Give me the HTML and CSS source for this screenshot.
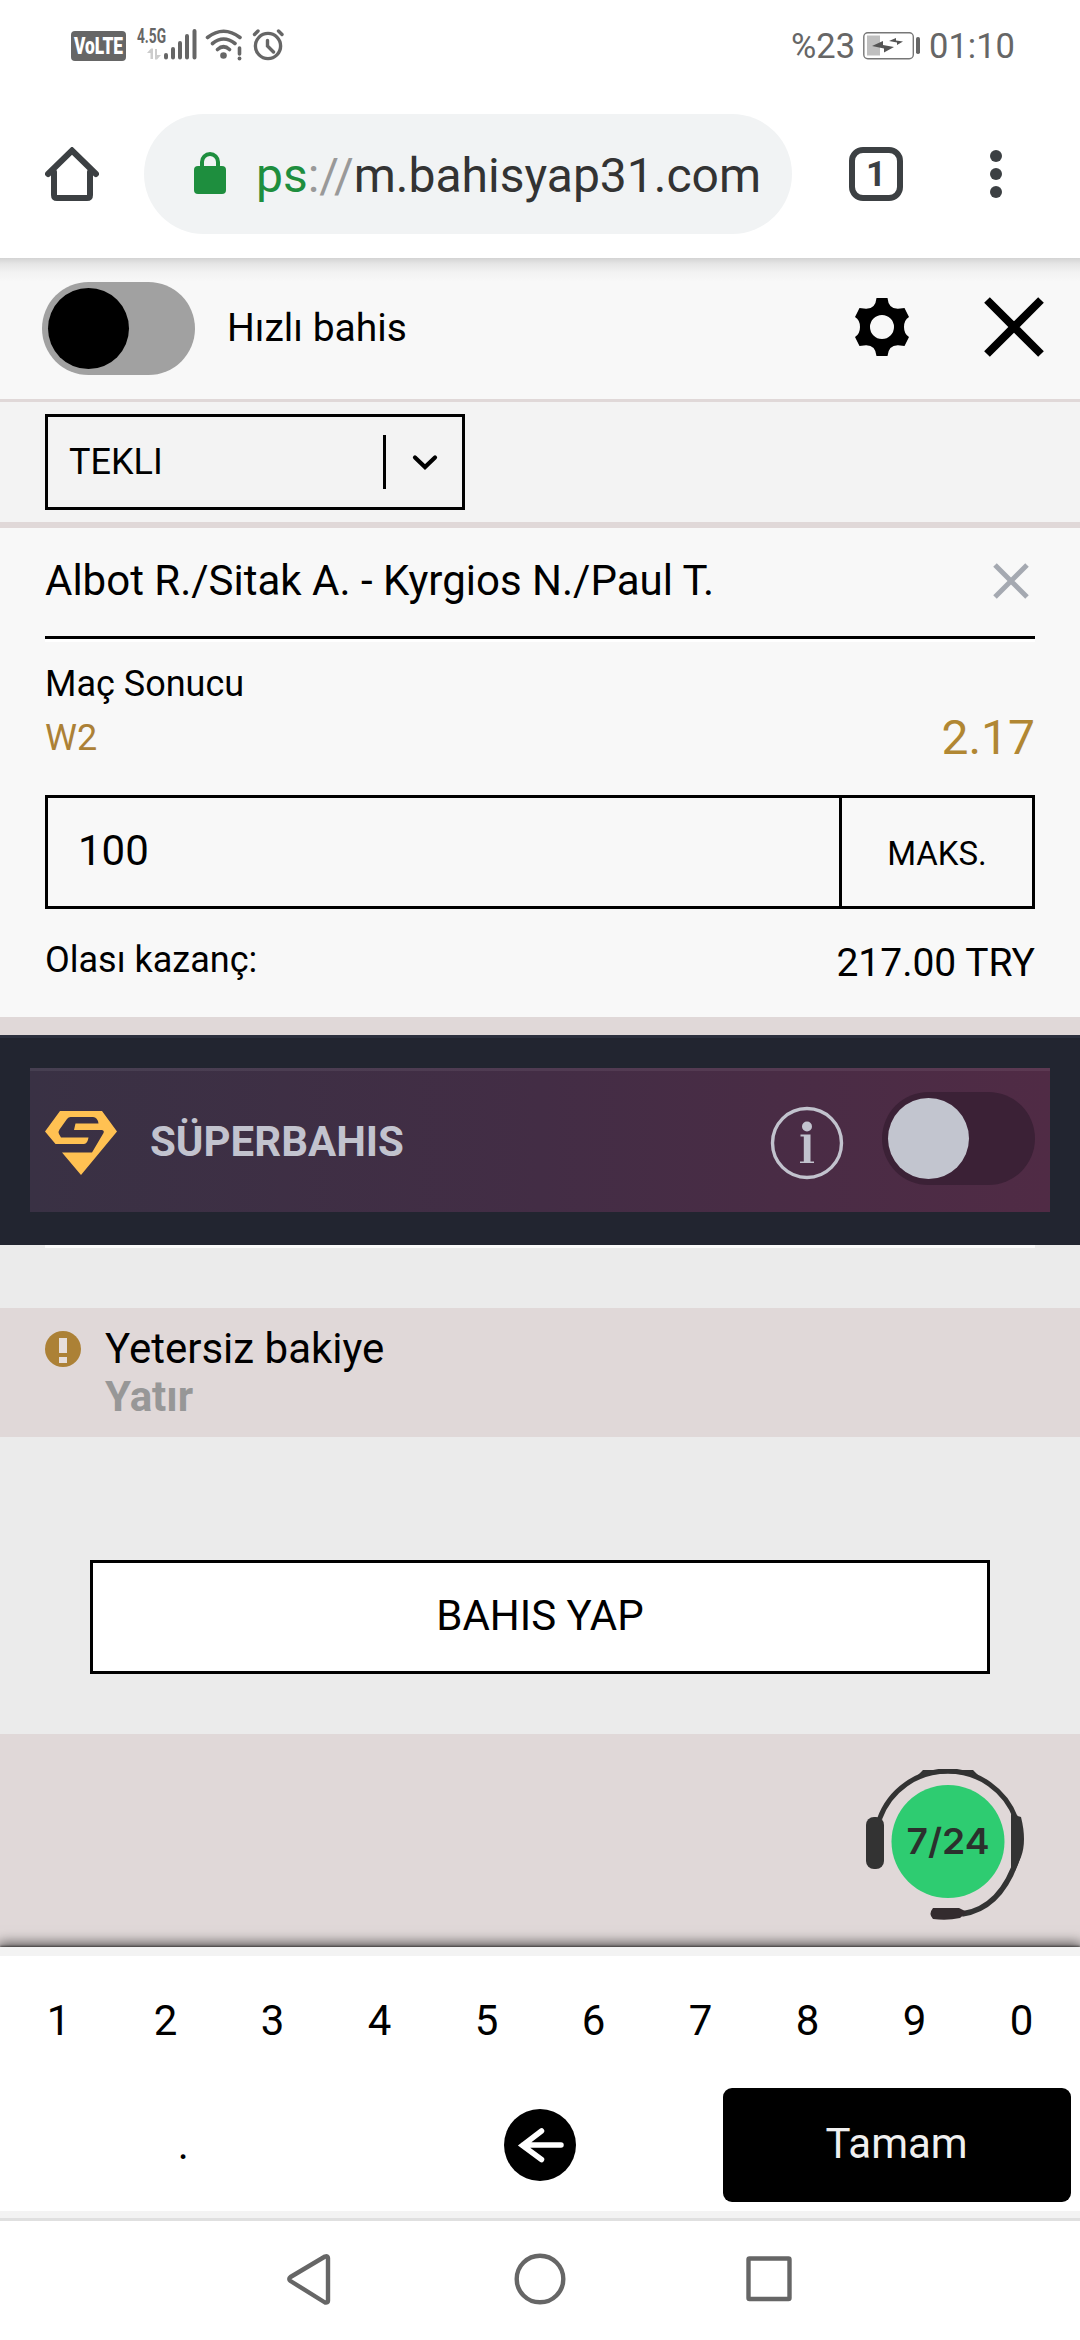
FILE: index.html
```html
<!DOCTYPE html>
<html lang="tr">
<head>
<meta charset="utf-8">
<title>Bahis kuponu</title>
<link rel="stylesheet" href="styles.css">
</head>
<body>
<div class="screen">
  <header class="status">
    <svg class="status-icons" width="220" height="40" viewBox="70 25 220 40">
      <rect x="71" y="31" width="55" height="30" rx="4" fill="#666"/>
      <text class="volte" x="74" y="54" textLength="49" lengthAdjust="spacingAndGlyphs">VoLTE</text>
      <text class="net" x="137" y="42.500" textLength="29" lengthAdjust="spacingAndGlyphs">4.5G</text>
      <path d="M147 53l4-4.500h2V59h-2.500v-6zM155 49h2v6h4l-4 4.500h-2z" fill="#ccc"/>
      <path d="M166 55v2.500M173 49v8.500M180 43v14.500M187 36v21.500M194.500 31v26.500" fill="none" stroke="#666" stroke-width="4" stroke-linecap="round"/>
      <g fill="none" stroke="#666" stroke-width="3.600" stroke-linecap="round">
        <path d="M207.500 37.500Q223.500 25 240 37.500M212.500 43.500Q223.500 34.500 235 43.500M217.500 49.500Q223.500 44 229.500 49.500"/>
        <path d="M239.500 48v6"/>
      </g>
      <circle cx="223.500" cy="55.500" r="3.300" fill="#666"/>
      <circle cx="239.500" cy="58.500" r="1.900" fill="#666"/>
      <g fill="none" stroke="#666" stroke-width="3.400" stroke-linecap="round">
        <circle cx="268" cy="46" r="12.600"/>
        <path d="M267.500 40.500V46l6 6M254.500 34.500l3.500-3.500M282 34.500l-3.500-3.500"/>
      </g>
    </svg>
    <div class="status-right">
      <span>%23</span>
      <svg width="58" height="28" viewBox="0 0 58 28">
        <rect x=".8" y=".8" width="49.500" height="26" rx="4" fill="none" stroke="#777" stroke-width="1.400"/>
        <rect x="4" y="3.500" width="13" height="20" fill="#bfbfbf"/>
        <path d="M9 14l11-5v4l11 2-10 5.500v-4zM26 9l7-3v2.500l7 1-6 3.500v-2.500z" fill="#555"/>
        <rect x="53" y="5" width="4" height="17" rx="1.800" fill="#666"/>
      </svg>
      <span>01:10</span>
    </div>
  </header>

  <nav class="browser">
    <svg width="54" height="54" viewBox="0 0 54 54">
      <path d="M9 25v23q0 3 3 3h30q3 0 3-3V25M3 27L27 3.500 51 27" fill="none" stroke="#3c4043" stroke-width="6" stroke-linecap="round"/>
    </svg>
    <div class="url">
      <svg width="32" height="42" viewBox="0 0 32 42">
        <rect y="14" width="32" height="28" rx="4" fill="#1e8e3e"/>
        <path d="M8 16v-6a8 8 0 0 1 16 0v6" fill="none" stroke="#1e8e3e" stroke-width="4"/>
      </svg>
      <span class="url-text"><span class="secure">ps</span><span class="sep">://</span>m.bahisyap31.com</span>
    </div>
    <div class="tabs">1</div>
    <svg width="12" height="48" viewBox="0 0 12 48" fill="#3c4043">
      <circle cx="6" cy="6" r="6"/><circle cx="6" cy="24" r="6"/><circle cx="6" cy="42" r="6"/>
    </svg>
  </nav>

  <section class="slip-head">
    <div class="toggle"><div class="knob"></div></div>
    <span class="slip-title">Hızlı bahis</span>
    <svg class="gear" width="54" height="58" viewBox="-27 -29 54 58">
      <path fill-rule="evenodd" d="M-5.500-29H5.500Q6.500-18 16-18.200L22.500-19 27-10Q22-7 22 0T27 10L22.500 19 16 18.200Q6.500 18 5.500 29H-5.500Q-6.500 18-16 18.200L-22.500 19-27 10Q-22 7-22 0T-27-10L-22.500-19-16-18.200Q-6.500-18-5.500-29zM0-12a12 12 0 1 0 0 24a12 12 0 1 0 0-24z"/>
    </svg>
    <svg width="60" height="60" viewBox="0 0 60 60">
      <path d="M3 3l54 54M57 3L3 57" stroke="#000" stroke-width="8"/>
    </svg>
  </section>

  <section class="mode">
    <div class="select">
      <span>TEKLI</span>
      <i class="bar"></i>
      <svg width="26" height="16" viewBox="0 0 26 16">
        <path d="M3 3.500l10 9.500L23 3.500" fill="none" stroke="#000" stroke-width="4.200" stroke-linecap="round"/>
      </svg>
    </div>
  </section>

  <section class="card">
    <div class="match">
      <span>Albot R./Sitak A. - Kyrgios N./Paul T.</span>
      <svg width="36" height="36" viewBox="0 0 36 36">
        <path d="M2 2l32 32M34 2L2 34" stroke="#a5a9b1" stroke-width="5"/>
      </svg>
    </div>
    <div class="market">
      <span>Maç Sonucu</span>
      <div class="pick"><span>W2</span><span class="odds">2.17</span></div>
    </div>
    <div class="stake">
      <div class="amount">100</div>
      <div class="max">MAKS.</div>
    </div>
    <div class="win"><span>Olası kazanç:</span><span class="sum">217.00 TRY</span></div>
  </section>

  <section class="super">
    <div class="super-box">
      <svg class="gem" width="72" height="64" viewBox="0 0 72 64">
        <path d="M15 0H57L72 20.500 36 64 17 41.500H47L58.500 22Q59.500 19.500 57 19H29l1.500-6.500H53.500Q52.500 6 48 6H25.500Q23.500 6 22 8L14.500 18.500Q13 20.500 14 23L16 26.500H43.500Q42.500 33 39 33H10.500L0 20.500z" fill="#ffc152"/>
      </svg>
      <span class="super-name">SÜPERBAHIS</span>
      <svg class="info" width="74" height="74" viewBox="0 0 74 74" fill="#c2c3ce">
        <circle cx="37" cy="37" r="34.500" fill="none" stroke="#c2c3ce" stroke-width="3.400"/>
        <circle cx="37" cy="20.500" r="5"/>
        <path d="M30.500 28.500h10v27h3.500v1.500h-14v-1.500h3.800v-25h-3.300z"/>
      </svg>
      <div class="toggle dark"><div class="knob"></div></div>
    </div>
  </section>

  <div class="gap"></div>

  <section class="alert">
    <svg width="36" height="36" viewBox="0 0 36 36">
      <circle cx="18" cy="18" r="18" fill="#ac8136"/>
      <path d="M14 7h8v15h-8zM14 26h8v6h-8z" fill="#e6dedb"/>
    </svg>
    <div class="alert-text"><span>Yetersiz bakiye</span><b>Yatır</b></div>
  </section>

  <section class="action"><div class="place">BAHIS YAP</div></section>

  <section class="support">
    <svg width="160" height="152" viewBox="865 1769 160 152">
      <g fill="none" stroke="#333">
        <path d="M879.500 1819A72.500 72.500 0 0 1 1016 1819" stroke-width="5"/>
        <path d="M1018 1856C1008 1888 990 1910 962 1914" stroke-width="5.500"/>
      </g>
      <path d="M923 1770h50l6 6q-31-5-62 0zM1011 1814l10 3q6 24 0 40l-6 14-4-4z" fill="#333"/>
      <rect x="866" y="1817" width="18" height="52" rx="8" fill="#333"/>
      <path d="M933 1908h26l8 4-7 6q-13 3-27 1-5-5 0-11z" fill="#332b2e"/>
      <circle cx="948" cy="1841.500" r="56.500" fill="#2ecc71"/>
      <text class="hours" x="948" y="1854" textLength="83" lengthAdjust="spacingAndGlyphs" text-anchor="middle">7/24</text>
    </svg>
  </section>

  <section class="keypad">
    <div class="digits"><span>1</span><span>2</span><span>3</span><span>4</span><span>5</span><span>6</span><span>7</span><span>8</span><span>9</span><span>0</span></div>
    <div class="keys">
      <span class="dot">.</span>
      <svg width="72" height="72" viewBox="0 0 72 72">
        <circle cx="36" cy="36" r="36"/>
        <path d="M57 36H19M37.500 22L18.500 36.500l19 14" fill="none" stroke="#fff" stroke-width="5.500" stroke-linecap="round"/>
      </svg>
      <div class="done">Tamam</div>
    </div>
  </section>

  <footer class="nav">
    <svg width="506" height="52" viewBox="287 2253 506 52" fill="none" stroke="#666" stroke-width="4.400" stroke-linejoin="round">
      <path d="M325 2256.500q3-1 3 1.500v43q0 2-3 1.500L290.500 2281q-2.500-2 0-4z"/>
      <circle cx="540" cy="2279" r="23.300"/>
      <rect x="748.500" y="2258.500" width="41" height="40.500" rx="1"/>
    </svg>
  </footer>
</div>
</body>
</html>
```
FILE: styles.css
```css
* { box-sizing: border-box; }
body { margin: 0; background: #fff; }
svg { display: block; flex: none; }
.screen {
  width: 1080px;
  height: 2340px;
  display: flex;
  flex-direction: column;
  overflow: hidden;
  font-family: Roboto, "Liberation Sans", sans-serif;
  font-size: 42px;
  color: #000;
}
.screen > * { flex: none; }

/* phone status bar */
.status {
  height: 90px;
  padding: 0 65px 0 70px;
  display: flex;
  justify-content: space-between;
}
.status-icons { margin-top: 25px; }
.volte { font: 900 23px Roboto, sans-serif; fill: #fff; }
.net { font: 700 20px Roboto, sans-serif; fill: #666; }
.status-right {
  height: 92px;
  display: flex;
  align-items: center;
  gap: 8px;
  font-size: 34.5px;
  color: #666;
}

/* address bar */
.browser {
  height: 168px;
  padding: 24px 78px 24px 45px;
  display: flex;
  align-items: center;
}
.url {
  width: 648px;
  height: 120px;
  margin: 0 57px 0 45px;
  padding: 0 0 2px 50px;
  border-radius: 60px;
  background: #f1f3f4;
  display: flex;
  align-items: center;
  gap: 30px;
}
.url-text { font-size: 48px; line-height: 60px; padding-top: 5px; color: #333; white-space: nowrap; }
.secure { color: #1e8e3e; }
.sep { color: #999; }
.tabs {
  width: 54px;
  height: 54px;
  margin-right: 87px;
  border: 6px solid #3c4043;
  border-radius: 14px;
  font-size: 35px;
  font-weight: 700;
  line-height: 43px;
  text-align: center;
  color: #3c4043;
}

/* betslip header */
.slip-head {
  height: 144px;
  padding: 0 36px 3px 42px;
  border-bottom: 3px solid #e0d8d8;
  background: linear-gradient(#d3d3d3, #e6e6e6 6px, #f2f2f2 14px, #f8f8f8 24px);
  display: flex;
  align-items: center;
}
.toggle {
  width: 153px;
  height: 93px;
  margin-top: 3px;
  padding: 6px;
  border-radius: 47px;
  background: #a1a1a1;
}
.knob { width: 81px; height: 81px; border-radius: 50%; background: #000; }
.slip-title { font-size: 39px; margin: 2px 0 0 32px; }
.gear { margin: 0 75px 0 auto; }

.mode {
  height: 126px;
  padding: 12px 45px;
  border-bottom: 6px solid #e0d8d8;
  background: #f3f3f3;
}
.select {
  width: 420px;
  height: 96px;
  padding: 0 24px 0 21px;
  border: 3px solid #000;
  display: flex;
  align-items: center;
  font-size: 36px;
}
.bar { width: 3px; height: 54px; margin: 0 26px 0 auto; background: #000; }

/* selection card */
.card { height: 489px; padding: 0 45px; background: #f8f8f8; }
.match {
  height: 111px;
  padding: 0 6px 3px 0;
  border-bottom: 3px solid #000;
  box-shadow: 0 3px #fff;
  display: flex;
  justify-content: space-between;
  align-items: center;
}
.market { padding-top: 18px; font-size: 36px; line-height: 54px; }
.pick { display: flex; justify-content: space-between; color: #ac8136; }
.odds { font-size: 48px; color: #b18733; }
.stake {
  height: 114px;
  margin-top: 30px;
  border: 3px solid #000;
  display: flex;
}
.amount { flex: 1; padding-left: 30px; line-height: 105px; }
.max { width: 193px; border-left: 3px solid #000; font-size: 33px; line-height: 111px; text-align: center; }
.win { padding-top: 27px; display: flex; justify-content: space-between; font-size: 36px; line-height: 48px; }
.sum { font-size: 39px; line-height: 55px; }

/* superbet banner */
.super {
  height: 228px;
  padding: 30px 30px 33px;
  border-top: 18px solid #e0d8d8;
  background: #222530;
  box-shadow: inset 0 3px #2c303e;
}
.super-box {
  height: 144px;
  margin-top: 3px;
  padding: 0 15px;
  background: linear-gradient(90deg, #393144, #432d45 50%, #502b45);
  box-shadow: inset 0 3px rgba(255, 255, 255, .07);
  display: flex;
  align-items: center;
}
.gem { margin-top: 5px; }
.super-name { margin: 3px 0 0 33px; font-weight: 700; color: #c2c3ce; }
.info { margin: 5px 38px 0 auto; }
.dark { margin-top: -3px; background: #3b2136; }
.dark .knob { background: #c2c5cf; }

.gap {
  height: 63px;
  background: linear-gradient(#fafafa, #fafafa) 45px 0 / 990px 3px no-repeat #ebebeb;
}
.alert {
  height: 129px;
  padding: 17px 45px;
  background: #e0d8d8;
  display: flex;
  gap: 24px;
}
.alert svg { margin-top: 6px; }
.alert-text { display: flex; flex-direction: column; line-height: 48px; }
.alert-text b { color: #979797; }
.action { height: 297px; padding: 123px 90px 0; background: #ebebeb; }
.place {
  height: 114px;
  border: 3px solid #000;
  background: #fff;
  line-height: 105px;
  text-align: center;
}
.support { height: 213px; padding: 35px 55px 0; background: #e0d8d8; display: flex; justify-content: flex-end; }
.hours { font: 600 36px Inter, sans-serif; fill: #2b302d; }

/* numeric keypad */
.keypad {
  height: 274px;
  padding: 0 5px;
  border: solid #f3f3f3;
  border-width: 9px 0 10px;
  box-shadow: 0 -2px 12px 2px rgba(0, 0, 0, .6), 0 -1px 2px rgba(0, 0, 0, .5);
  background: #fff;
  position: relative;
}
.digits { display: grid; grid-template-columns: repeat(10, 1fr); height: 132px; line-height: 129px; text-align: center; }
.keys { display: grid; grid-template-columns: repeat(3, 1fr); place-items: center; height: 114px; }
.dot { padding-bottom: 2px; }
.done {
  width: 348px;
  height: 114px;
  border-radius: 9px;
  background: #000;
  color: #f0f0f0;
  line-height: 112px;
  text-align: center;
}
.nav {
  height: 119px;
  padding-bottom: 3px;
  background: #fff;
  box-shadow: 0 -3px #e0e0e0;
  position: relative;
  display: flex;
  justify-content: center;
  align-items: center;
}
```
